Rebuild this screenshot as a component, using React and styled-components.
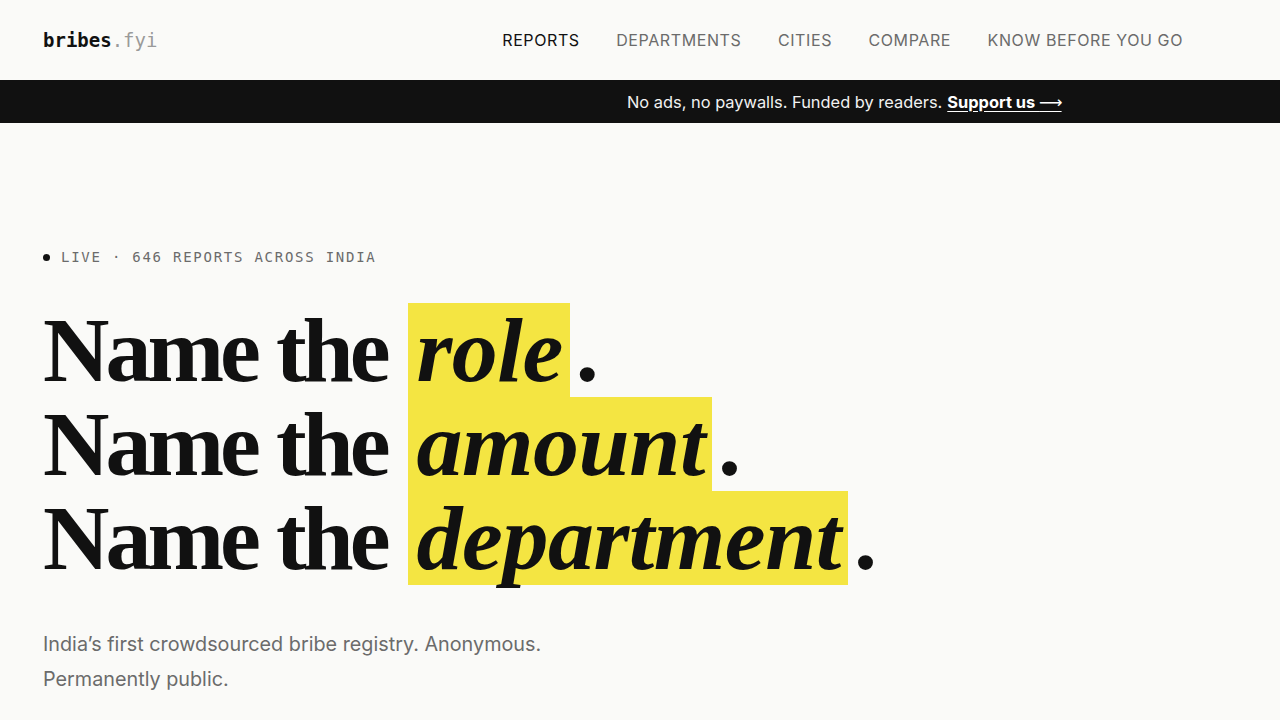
import styled, { createGlobalStyle } from "styled-components";

const GlobalStyle = createGlobalStyle`
  html, body {
    margin: 0;
    padding: 0;
    background: #fafaf8;
  }
  body {
    font-family: Inter, "Noto Sans", sans-serif;
    color: #111;
  }
`;

const Header = styled.header`
  height: 80px;
  display: flex;
  align-items: center;
  justify-content: space-between;
  padding: 0 97px 0 43px;
`;

const Logo = styled.a`
  font-family: "DejaVu Sans Mono", "Liberation Mono", monospace;
  font-size: 19px;
  font-weight: 700;
  color: #111;
  text-decoration: none;
`;

const LogoTld = styled.span`
  font-weight: 400;
  color: #9a9a9a;
`;

const Nav = styled.nav`
  display: flex;
  gap: 36.5px;
`;

const NavLink = styled.a`
  font-size: 16px;
  letter-spacing: 0.6px;
  text-transform: uppercase;
  color: ${(p) => (p.$active ? "#111" : "#6b6b6b")};
  text-decoration: none;
`;

const Banner = styled.div`
  height: 43px;
  background: #111;
  color: #f2f2f2;
  display: flex;
  align-items: center;
  padding-left: 627px;
  font-size: 16.4px;
`;

const SupportLink = styled.a`
  margin-left: 5px;
  color: #fff;
  font-weight: 700;
  text-decoration: underline;
  text-underline-offset: 3px;
`;

const Arrow = styled.span`
  font-family: "DejaVu Sans", sans-serif;
  font-weight: 400;
  letter-spacing: -1px;
`;

const Hero = styled.main`
  padding: 126px 43px 40px;
`;

const Status = styled.div`
  display: flex;
  align-items: center;
  gap: 11px;
  font-family: "DejaVu Sans Mono", "Liberation Mono", monospace;
  font-size: 14px;
  letter-spacing: 1.75px;
  color: #6b6b6b;
`;

const Dot = styled.span`
  width: 7px;
  height: 7px;
  border-radius: 50%;
  background: #111;
`;

const Headline = styled.h1`
  margin: 38px 0 0;
  font-family: "Liberation Serif", "Times New Roman", serif;
  font-weight: 700;
  font-size: 92px;
  line-height: 94px;
  color: #111;
`;

const Line = styled.span`
  display: block;
  white-space: nowrap;
`;

const Lead = styled.span`
  letter-spacing: -4px;
  margin-right: 21px;
`;

const Mark = styled.em`
  display: inline-block;
  background: #f4e542;
  padding: 0 7px 0 9px;
  font-style: italic;
  letter-spacing: -0.5px;
`;

const Stop = styled.span`
  margin-left: 6px;
`;

const Subtitle = styled.p`
  margin: 42px 0 0;
  max-width: 520px;
  font-size: 19.8px;
  line-height: 35px;
  color: #6b6b6b;
`;

const words = ["role", "amount", "department"];

export default function App() {
  return (
    <>
      <GlobalStyle />
      <Header>
        <Logo href="#">
          bribes<LogoTld>.fyi</LogoTld>
        </Logo>
        <Nav>
          <NavLink href="#" $active>Reports</NavLink>
          <NavLink href="#">Departments</NavLink>
          <NavLink href="#">Cities</NavLink>
          <NavLink href="#">Compare</NavLink>
          <NavLink href="#">Know before you go</NavLink>
        </Nav>
      </Header>
      <Banner>
        No ads, no paywalls. Funded by readers.
        <SupportLink href="#">
          Support us <Arrow>⟶</Arrow>
        </SupportLink>
      </Banner>
      <Hero>
        <Status>
          <Dot />
          LIVE · 646 REPORTS ACROSS INDIA
        </Status>
        <Headline>
          {words.map((w) => (
            <Line key={w}>
              <Lead>Name the</Lead>
              <Mark>{w}</Mark>
              <Stop>.</Stop>
            </Line>
          ))}
        </Headline>
        <Subtitle>
          India’s first crowdsourced bribe registry. Anonymous. Permanently
          public.
        </Subtitle>
      </Hero>
    </>
  );
}
